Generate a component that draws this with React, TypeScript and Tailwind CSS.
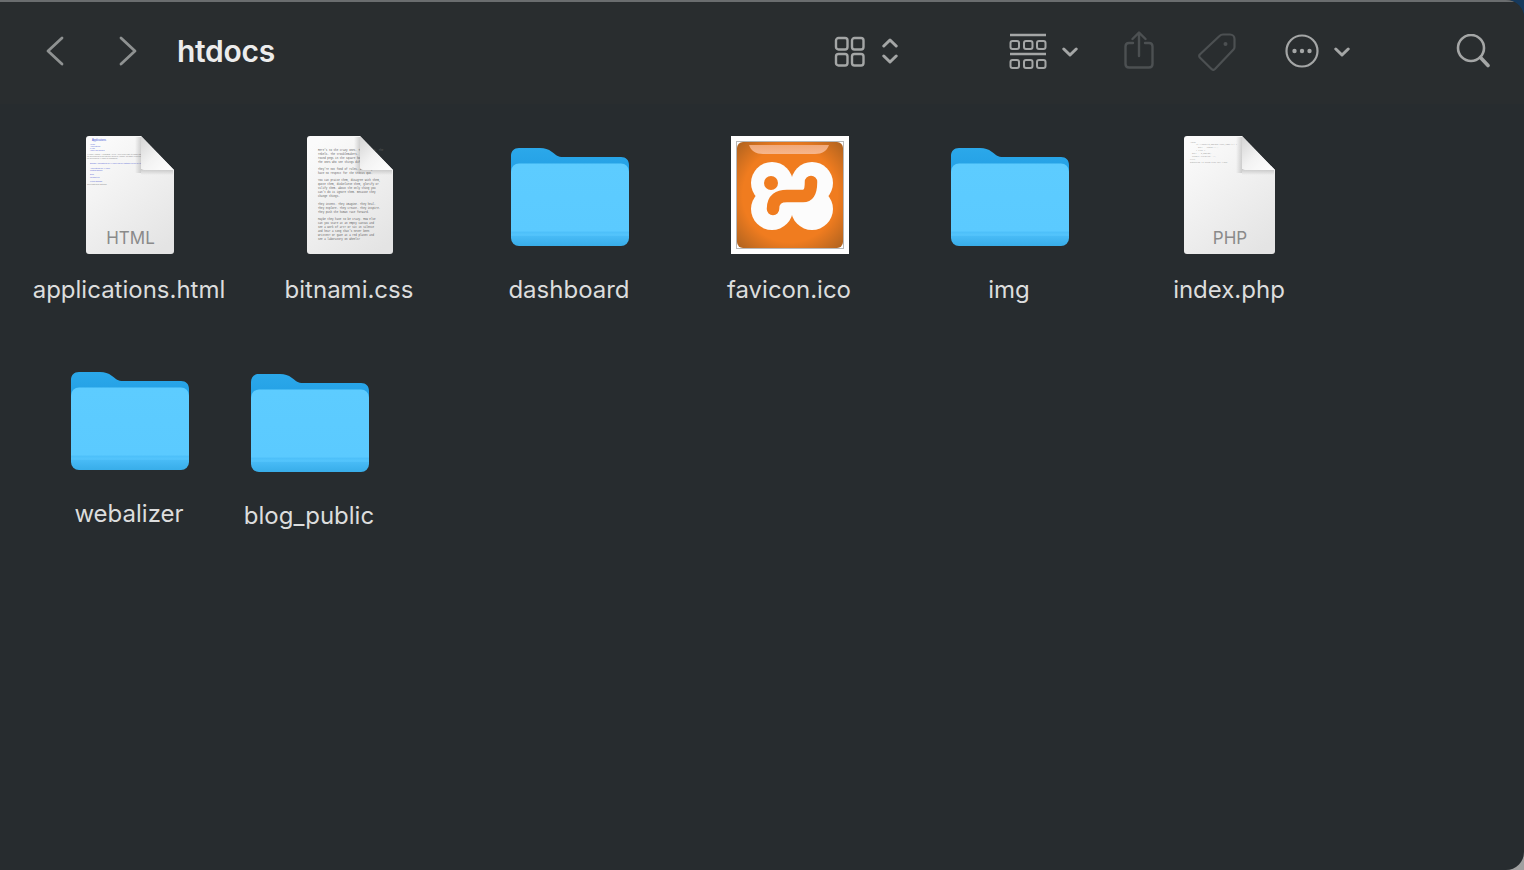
import React from 'react';

type Item = { name: string; kind: 'html' | 'css' | 'folder' | 'ico' | 'php' };

const row1: Item[] = [
  { name: 'applications.html', kind: 'html' },
  { name: 'bitnami.css', kind: 'css' },
  { name: 'dashboard', kind: 'folder' },
  { name: 'favicon.ico', kind: 'ico' },
  { name: 'img', kind: 'folder' },
  { name: 'index.php', kind: 'php' },
];

const cssLines = [
  ["Here's to the crazy ones. The misfits. The", 'rebels. The troublemakers. The round', 'round pegs in the square holes. The', 'The ones who see things differently.'],
  ["They're not fond of rules. And they", 'have no respect for the status quo.'],
  ['You can praise them, disagree with them,', 'quote them, disbelieve them, glorify or', 'vilify them. About the only thing you', "can't do is ignore them. Because they", 'change things.'],
  ['They invent. They imagine. They heal.', 'They explore. They create. They inspire.', 'They push the human race forward.'],
  ['Maybe they have to be crazy. How else', 'can you stare at an empty canvas and', 'see a work of art? Or sit in silence', "and hear a song that's never been", 'written? Or gaze at a red planet and', 'see a laboratory on wheels?'],
];

const FolderIcon = () => (
  <svg width="118" height="100" viewBox="0 0 118 100" className="block">
    <defs>
      <linearGradient id="fback" x1="0" y1="0" x2="0" y2="1">
        <stop offset="0" stopColor="#2ba8ea" />
        <stop offset="1" stopColor="#1c97df" />
      </linearGradient>
      <linearGradient id="ffront" x1="0" y1="0" x2="0" y2="1">
        <stop offset="0" stopColor="#5dccff" />
        <stop offset="0.82" stopColor="#5bcaff" />
        <stop offset="0.83" stopColor="#4cbff9" />
        <stop offset="0.87" stopColor="#55c5fc" />
        <stop offset="0.88" stopColor="#48bbf6" />
        <stop offset="1" stopColor="#38ade9" />
      </linearGradient>
    </defs>
    <path d="M0 9C0 4 3 1 8 1H29C34 1 37 2 41 5C45 8 47 10 52 10H110C115 10 118 13 118 18V50H0Z" fill="url(#fback)" />
    <rect x="0" y="16.5" width="118" height="82.5" rx="8" fill="url(#ffront)" />
  </svg>
);

const DocShape = ({ id, x, w, children }: { id: string; x: number; w: number; children?: React.ReactNode }) => {
  // dog-eared page, fold is 33px wide
  const r = x + w;
  return (
    <svg width="118" height="118" viewBox="0 0 118 118" className="block">
      <defs>
        <linearGradient id={`${id}page`} x1="0.2" y1="0" x2="0.8" y2="1">
          <stop offset="0" stopColor="#fbfbfb" />
          <stop offset="1" stopColor="#e4e4e4" />
        </linearGradient>
        <linearGradient id={`${id}fold`} x1="0" y1="0" x2="1" y2="1">
          <stop offset="0" stopColor="#d4d4d4" />
          <stop offset="0.5" stopColor="#f3f3f3" />
          <stop offset="1" stopColor="#ffffff" />
        </linearGradient>
        <linearGradient id={`${id}shadow`} x1="0" y1="0" x2="0" y2="1">
          <stop offset="0" stopColor="#000000" stopOpacity="0.18" />
          <stop offset="1" stopColor="#000000" stopOpacity="0" />
        </linearGradient>
        <linearGradient id={`${id}side`} x1="1" y1="0" x2="0" y2="0">
          <stop offset="0" stopColor="#000000" stopOpacity="0.16" />
          <stop offset="1" stopColor="#000000" stopOpacity="0" />
        </linearGradient>
      </defs>
      <path
        d={`M${x + 3} 0H${r - 33}L${r} 34V115C${r} 117 ${r - 1} 118 ${r - 3} 118H${x + 3}C${x + 1} 118 ${x} 117 ${x} 115V3C${x} 1 ${x + 1} 0 ${x + 3} 0Z`}
        fill={`url(#${id}page)`}
      />
      {children}
      <rect x={r - 33} y="33" width="32" height="6" fill={`url(#${id}shadow)`} />
      <rect x={r - 39} y="1" width="6" height="36" fill={`url(#${id}side)`} />
      <path d={`M${r - 33} 0L${r} 34H${r - 29}C${r - 32} 34 ${r - 33} 33 ${r - 33} 30Z`} fill={`url(#${id}fold)`} />
    </svg>
  );
};

const XamppIcon = () => (
  <div className="w-[118px] h-[118px] bg-white p-[5px]">
    <div className="w-full h-full border border-[#b8b8b8]">
      <svg width="106" height="106" viewBox="0 0 106 106" className="block">
        <defs>
          <radialGradient id="xampp" cx="0.5" cy="0.5" r="0.72">
            <stop offset="0.62" stopColor="#f07c1f" />
            <stop offset="1" stopColor="#a9601f" />
          </radialGradient>
          <linearGradient id="shine" x1="0" y1="0" x2="0" y2="1">
            <stop offset="0" stopColor="#f2a878" />
            <stop offset="1" stopColor="#f6b68c" />
          </linearGradient>
        </defs>
        <rect x="0" y="0" width="106" height="106" rx="6" fill="url(#xampp)" />
        <path d="M12 3H92C90 9 85 12 78 12H26C19 12 14 9 12 3Z" fill="url(#shine)" />
        {/* white lobes of the mark */}
        <g fill="#fcfcfc">
          <circle cx="35" cy="41" r="21" />
          <circle cx="75" cy="41" r="21" />
          <circle cx="35" cy="67" r="21" />
          <circle cx="75" cy="67" r="21" />
          <rect x="30" y="36" width="50" height="36" />
        </g>
        <circle cx="34" cy="41" r="7" fill="#f07c1f" />
        <path d="M36 67C36 57 42 54 50 54H66C72 54 74 49 74 40" fill="none" stroke="#f07c1f" strokeWidth="12.5" strokeLinecap="round" />
      </svg>
    </div>
  </div>
);

const HtmlThumb = () => (
  <g fontFamily="Liberation Sans, sans-serif" fontSize="1.9" fill="#5a6ad8">
    <text x="21" y="5" fontSize="2.6" fill="#3b4fd6">Applications</text>
    <text x="19" y="9">Home</text>
    <text x="19" y="11">Applications</text>
    <text x="19" y="13">FAQs</text>
    <text x="19" y="15">HOW-TO Guides</text>
    <g fill="#8a8a8a">
      <text x="16" y="19">XAMPP Apache + MariaDB + PHP + Perl is an easy to install distribution</text>
      <text x="16" y="21">for developers to get into the world of Apache. To make it convenient</text>
      <text x="16" y="23">for developers XAMPP is configured</text>
    </g>
    <text x="19" y="28">Bitnami Applications for XAMPP can be installed on top of your setup</text>
    <text x="19" y="33">Applications for XAMPP</text>
    <text x="19" y="35">Getting started</text>
    <text x="19" y="39">Blog</text>
    <text x="19" y="42">Contact Us</text>
    <text x="19" y="46">Follow Bitnami</text>
    <text x="16" y="49" fill="#8a8a8a">Copyright 2019 Bitnami</text>
  </g>
);

const PhpThumb = () => (
  <g fontFamily="Liberation Mono, monospace" fontSize="1.9" fill="#9a9a9a">
    <text x="19" y="7">&lt;?php</text>
    <text x="25" y="9">if (!empty($_SERVER['HTTP_HOST'])) {'{'}</text>
    <text x="27" y="12">$uri = 'https://';</text>
    <text x="25" y="15">{'}'} else {'{'}</text>
    <text x="21" y="18">$uri .= $_SERVER;</text>
    <text x="21" y="21">header('Location: ');</text>
    <text x="19" y="24">exit;</text>
    <text x="19" y="27">Something is wrong with the XAMPP</text>
  </g>
);

const CssThumb = () => {
  let y = 15;
  const rows: React.ReactNode[] = [];
  cssLines.forEach((block, i) => {
    block.forEach((line, j) => {
      rows.push(
        <text key={`${i}-${j}`} x="27" y={y}>
          {line}
        </text>
      );
      y += 4;
    });
    y += 3.2;
  });
  return (
    <g fontFamily="Liberation Mono, monospace" fontSize="2.6" fill="#5c5c5c">
      {rows}
    </g>
  );
};

const Thumb = ({ kind }: { kind: Item['kind'] }) => {
  if (kind === 'folder') return <div className="pt-[11px]"><FolderIcon /></div>;
  if (kind === 'ico') return <XamppIcon />;
  if (kind === 'html') {
    return (
      <DocShape id="h" x={15} w={88}>
        <HtmlThumb />
        <text x="59.5" y="108" textAnchor="middle" fontFamily="Inter, sans-serif" fontSize="17" fill="#8a8a8a">HTML</text>
      </DocShape>
    );
  }
  if (kind === 'php') {
    return (
      <DocShape id="p" x={13} w={91}>
        <PhpThumb />
        <text x="59" y="108" textAnchor="middle" fontFamily="Inter, sans-serif" fontSize="17" fill="#8a8a8a">PHP</text>
      </DocShape>
    );
  }
  return (
    <DocShape id="c" x={16} w={86}>
      <CssThumb />
    </DocShape>
  );
};

const FileCell = ({ item, className }: { item: Item; className: string }) => (
  <div className={`flex flex-col items-center ${className}`}>
    <div className="h-[118px] ml-[2px]">
      <Thumb kind={item.kind} />
    </div>
    <div className="mt-[20px] text-[24px] leading-[32px] text-[#dcdddd] whitespace-nowrap">{item.name}</div>
  </div>
);

const GridIcon = () => (
  <svg width="32" height="32" viewBox="0 0 32 32" fill="none" stroke="#a4a6a6" strokeWidth="2.4">
    <rect x="2" y="2" width="11.5" height="11.5" rx="2.5" />
    <rect x="18" y="2" width="11.5" height="11.5" rx="2.5" />
    <rect x="2" y="18" width="11.5" height="11.5" rx="2.5" />
    <rect x="18" y="18" width="11.5" height="11.5" rx="2.5" />
  </svg>
);

const GroupIcon = () => (
  <svg width="38" height="36" viewBox="0 0 38 36" fill="none" stroke="#a4a6a6" strokeWidth="2">
    <path d="M1 2H37M1 21H37" strokeWidth="2.4" />
    {[1.5, 15, 28].flatMap((x) =>
      [8, 27].map((y) => <rect key={`${x}-${y}`} x={x} y={y} width="8.5" height="8" rx="2" />)
    )}
  </svg>
);

const ShareIcon = () => (
  <svg width="30" height="38" viewBox="0 0 30 38" fill="none" stroke="#4c5052" strokeWidth="2.4" strokeLinecap="round" strokeLinejoin="round">
    <path d="M9 12H5C3 12 1.5 13.5 1.5 15.5V33C1.5 35 3 36.5 5 36.5H25C27 36.5 28.5 35 28.5 33V15.5C28.5 13.5 27 12 25 12H21" />
    <path d="M15 25V2M8.5 8L15 1.5L21.5 8" />
  </svg>
);

const TagIcon = () => (
  <svg width="38" height="38" viewBox="0 0 38 38" fill="none" stroke="#4c5052" strokeWidth="2.2" strokeLinejoin="round">
    <path d="M25 1.5H32C34.5 1.5 36.5 3.5 36.5 6V14C36.5 15 36 16 35.5 16.5L17 36C16 37 14.5 37 13.5 36L1.8 24.5C1 23.5 1 22.5 1.8 21.5L21.5 3C22.5 2 23.5 1.5 25 1.5Z" />
    <circle cx="27.5" cy="11" r="2" fill="#4c5052" stroke="none" />
  </svg>
);

const MoreIcon = () => (
  <svg width="34" height="34" viewBox="0 0 34 34" fill="none">
    <circle cx="17" cy="17" r="15.5" stroke="#a4a6a6" strokeWidth="2.2" />
    <circle cx="9.5" cy="17" r="2.2" fill="#a4a6a6" />
    <circle cx="17" cy="17" r="2.2" fill="#a4a6a6" />
    <circle cx="24.5" cy="17" r="2.2" fill="#a4a6a6" />
  </svg>
);

const SearchIcon = () => (
  <svg width="34" height="34" viewBox="0 0 34 34" fill="none" stroke="#a4a6a6" strokeLinecap="round">
    <circle cx="15" cy="14" r="13" strokeWidth="2.6" />
    <path d="M24.5 23.5L32 31.5" strokeWidth="3.6" />
  </svg>
);

const NavChevron = ({ flip }: { flip?: boolean }) => (
  <svg width="18" height="30" viewBox="0 0 18 30" fill="none" stroke="#8f9292" strokeWidth="2.8" strokeLinecap="round" strokeLinejoin="round">
    <path d={flip ? 'M2 2L16 15L2 28' : 'M16 2L2 15L16 28'} />
  </svg>
);

const SmallChevron = ({ up }: { up?: boolean }) => (
  <svg width="16" height="10" viewBox="0 0 16 10" fill="none" stroke="#a4a6a6" strokeWidth="3" strokeLinecap="round" strokeLinejoin="round" className="block">
    <path d={up ? 'M1.8 8L8 2L14.2 8' : 'M1.8 2L8 8L14.2 2'} />
  </svg>
);

export default function App() {
  return (
    <div
      className="w-[1524px] h-[870px] overflow-hidden bg-linear-to-b from-[#16395c] from-50% to-[#a0a0a0] to-50%"
      style={{ fontFamily: 'Inter, "Liberation Sans", sans-serif' }}
    >
      <div className="w-full h-full bg-[#272c2f] rounded-tr-[18px] rounded-br-[18px] overflow-hidden flex flex-col">
        {/* toolbar */}
        <div className="h-[104px] shrink-0 bg-[#292d2f] border-t-2 border-[#6a6d6f] flex items-center pb-[4px] pr-[34px]">
          <div className="ml-[46px]"><NavChevron /></div>
          <div className="ml-[55px]"><NavChevron flip /></div>
          <h1 className="ml-[40px] flex-1 text-[30px] leading-none font-semibold tracking-[-0.01em] text-[#ececec]">htdocs</h1>

          <div className="mt-[2px]"><GridIcon /></div>
          <div className="ml-[16px] flex flex-col gap-[6px]">
            <SmallChevron up />
            <SmallChevron />
          </div>
          <div className="ml-[111px]"><GroupIcon /></div>
          <div className="ml-[15px] mt-[2px]"><SmallChevron /></div>
          <div className="ml-[46px] -mt-[3px]"><ShareIcon /></div>
          <div className="ml-[44px] mt-[2px]"><TagIcon /></div>
          <div className="ml-[49px]"><MoreIcon /></div>
          <div className="ml-[15px] mt-[2px]"><SmallChevron /></div>
          <div className="ml-[106px]"><SearchIcon /></div>
        </div>

        {/* icon view */}
        <div className="flex-1 pl-[19px] pt-[32px]">
          <div className="flex">
            {row1.map((item) => (
              <FileCell key={item.name} item={item} className="w-[220px]" />
            ))}
          </div>
          <div className="flex mt-[54px]">
            <FileCell item={{ name: 'webalizer', kind: 'folder' }} className="w-[220px]" />
            <FileCell item={{ name: 'blog_public', kind: 'folder' }} className="w-[140px] mt-[2px]" />
          </div>
        </div>
      </div>
    </div>
  );
}
